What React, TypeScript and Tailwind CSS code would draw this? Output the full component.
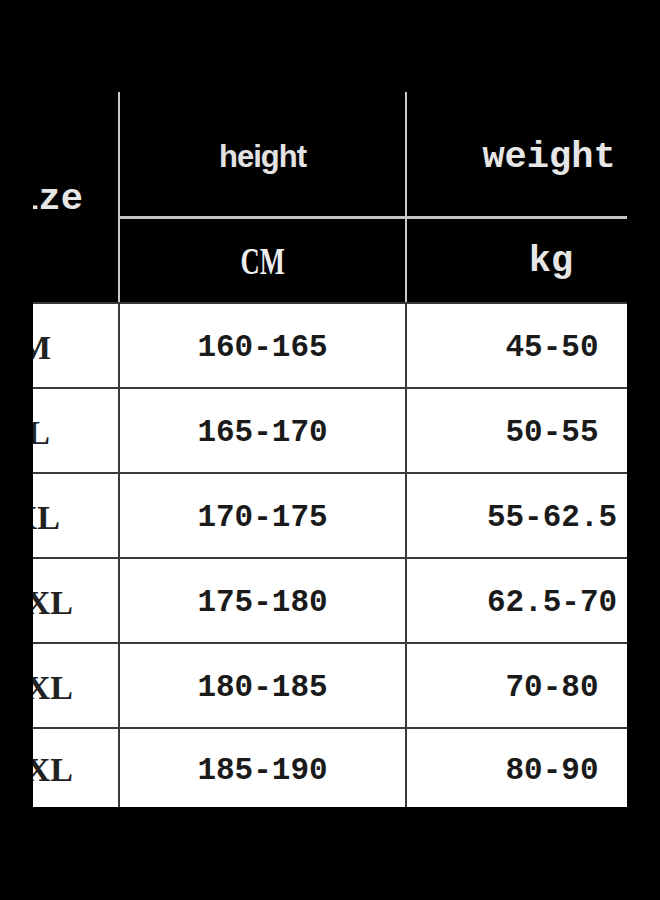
const rows = [
  { size: 'M', pr: 'pr-[67px]', h: '160-165', w: '45-50' },
  { size: 'L', pr: 'pr-[68px]', h: '165-170', w: '50-55' },
  { size: 'XL', pr: 'pr-[58px]', h: '170-175', w: '55-62.5' },
  { size: '2XL', pr: 'pr-[45px]', h: '175-180', w: '62.5-70' },
  { size: '3XL', pr: 'pr-[45px]', h: '180-185', w: '70-80' },
  { size: '4XL', pr: 'pr-[45px]', h: '185-190', w: '80-90' },
];

const mono = "font-['Liberation_Mono',monospace] font-bold";

export default function App() {
  return (
    <div className="flex h-[900px] w-[660px] bg-black pt-[92px]">
      <div className="ml-[33px] h-[715px] w-[594px] overflow-hidden">
        {/* Header */}
        <div className="flex h-[210px]">
          <div className={`flex w-[85px] shrink-0 items-center justify-end whitespace-nowrap pr-[35px] pt-[4px] text-[37px] leading-none text-[#e6e6e6] ${mono}`}>
            Size
          </div>
          <div className="w-[2px] shrink-0 bg-[#c9c9c9]" />
          <div className="flex shrink-0 flex-col">
            <div className="flex h-[124px]">
              <div className="flex w-[285px] shrink-0 items-center justify-center pt-[4px] font-['Liberation_Sans',Arial,sans-serif] text-[31px] font-bold leading-none tracking-[-1px] text-[#e2e2e2]">
                height
              </div>
              <div className="w-[2px] shrink-0 bg-[#c9c9c9]" />
              <div className={`flex w-[284px] shrink-0 items-center justify-center pt-[6px] text-[37px] leading-none text-[#e6e6e6] ${mono}`}>
                weight
              </div>
            </div>
            <div className="h-[3px] w-[571px] bg-[#c4c4c4]" />
            <div className="flex h-[83px]">
              <div className="flex w-[285px] shrink-0 items-center justify-center">
                <span className="inline-block scale-x-[0.7] font-['Liberation_Serif',serif] text-[38px] font-bold leading-none text-[#eeeeee]">
                  CM
                </span>
              </div>
              <div className="w-[2px] shrink-0 bg-[#c9c9c9]" />
              <div className={`flex w-[284px] shrink-0 items-center justify-center pl-[4px] pt-[2px] text-[37px] leading-none text-[#e6e6e6] ${mono}`}>
                kg
              </div>
            </div>
          </div>
        </div>

        {/* Body */}
        <div className="flex w-[660px] flex-col bg-white">
          {rows.map((r, i) => (
            <div
              key={r.h}
              className={`flex border-t-2 border-[#3a3a3a] ${i === rows.length - 1 ? 'h-[80px]' : 'h-[85px]'}`}
            >
              <div className={`flex w-[85px] shrink-0 items-center justify-end whitespace-nowrap pt-[4px] ${r.pr} font-['Liberation_Serif',serif] text-[34px] font-bold leading-none text-[#222]`}>
                {r.size}
              </div>
              <div className="w-[2px] shrink-0 bg-[#3a3a3a]" />
              <div className={`flex w-[285px] shrink-0 items-center justify-center pt-[4px] text-[31px] leading-none text-[#1a1a1a] ${mono}`}>
                {r.h}
              </div>
              <div className="w-[2px] shrink-0 bg-[#3a3a3a]" />
              <div className={`flex w-[290px] shrink-0 items-center justify-center pt-[4px] text-[31px] leading-none text-[#1a1a1a] ${mono}`}>
                {r.w}
              </div>
            </div>
          ))}
        </div>
      </div>
    </div>
  );
}
